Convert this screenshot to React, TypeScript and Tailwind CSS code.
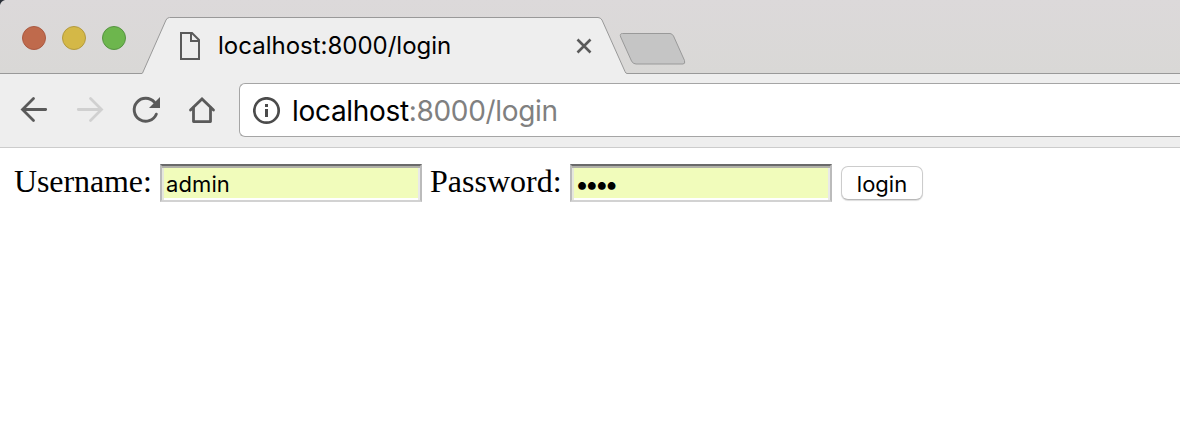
function TrafficLights() {
  return (
    <div className="flex h-[76px] gap-4 pl-[22px]">
      <span className="h-6 w-6 rounded-full border border-[#aa5a42] bg-[#bf6a4c]" />
      <span className="h-6 w-6 rounded-full border border-[#b39a3f] bg-[#d4b847]" />
      <span className="h-6 w-6 rounded-full border border-[#569442] bg-[#6db64d]" />
    </div>
  );
}

function TabStrip() {
  return (
    <div className="flex h-[74px] bg-linear-to-b from-[#dcd9da] to-[#d9d8d6]">
      <div className="relative w-[142px] overflow-hidden border-b border-[#999] pt-[26px]">
        <svg className="absolute top-0 left-0" width="6" height="6">
          <path d="M0 0H5Q1 1 0 5Z" fill="#2b3038" />
        </svg>
        <TrafficLights />
      </div>
      <div className="relative h-[74px] w-[485px]">
        <svg className="absolute inset-0" width="485" height="74" fill="none">
          <path
            d="M0 74V73.5Q.5 73.5 1 72L24 20Q25.300 17.500 27.500 17.500H456Q458.500 17.500 460 20L483 71.500Q483.800 73.500 485 73.500V74Z"
            fill="#eee"
          />
          <path
            d="M0 73.500Q.5 73.500 1 72L24 20Q25.300 17.500 27.500 17.500H456Q458.500 17.500 460 20L483 71.500Q483.800 73.500 485 73.500"
            stroke="#999"
          />
        </svg>
        <div className="relative flex h-[74px] items-start pl-[38px]">
          <svg className="mt-[32px] shrink-0" width="20" height="28" fill="none" stroke="#5a5a5a" strokeWidth="2">
            <path d="M1 1H12L19 8V27H1Z" />
            <path d="M11 1V9H19" />
          </svg>
          <span className="mt-[30px] ml-[18px] w-[358px] font-['Inter',sans-serif] text-[24px] leading-8 text-black">
            localhost:8000/login
          </span>
          <svg className="mt-[38px] shrink-0" width="16" height="16" stroke="#5a5a5a" strokeWidth="2.600">
            <path d="M1.500 1.500L14.500 14.500M14.500 1.500L1.500 14.500" />
          </svg>
        </div>
      </div>
      <div className="flex-1 border-b border-[#999] pt-[32px]">
        <svg className="-ml-[8px]" width="68" height="34">
          <path
            d="M3.500 1.500H51Q53 1.500 54.500 4L65.500 28.500Q66.500 32 64 32H17Q14 32 12.500 29L1.700 5Q.3 1.500 3.500 1.500Z"
            fill="#c5c5c5"
            stroke="#999"
          />
        </svg>
      </div>
    </div>
  );
}

function Toolbar() {
  return (
    <div className="flex h-[74px] border-b border-[#ccc] bg-[#eee]">
      <div className="flex w-[239px] shrink-0 pt-[21px] pl-[18px]">
        <svg className="mr-[26px]" width="30" height="30" fill="none" stroke="#5a5a5a" strokeWidth="2.800" strokeLinecap="round">
          <path d="M27.700 14.500H5M15.500 3.500L4.500 14.500L15.500 25.500" />
        </svg>
        <svg className="mr-[26px]" width="30" height="30" fill="none" stroke="#d0d0d0" strokeWidth="2.800" strokeLinecap="round">
          <path d="M4.300 14.500H27M16.500 3.500L27.500 14.500L16.500 25.500" />
        </svg>
        <svg className="mr-[26px]" width="30" height="30" fill="none">
          <path d="M26.300 19.200A11.500 11.500 0 1 1 24.500 7.300" stroke="#5a5a5a" strokeWidth="2.900" strokeLinecap="round" />
          <path d="M30 2V13H19Z" fill="#5a5a5a" />
        </svg>
        <svg width="30" height="30" fill="none" stroke="#5a5a5a" strokeWidth="2.800" strokeLinecap="round">
          <path d="M4.500 15L16 3.900L27.500 15" />
          <path d="M7.500 13V26.600H24.500V13" strokeLinejoin="round" />
        </svg>
      </div>
      <div className="mt-[9px] flex h-[54px] flex-1 items-center rounded-l-[6px] border border-r-0 border-[#a5a5a5] bg-white pl-[13px]">
        <svg className="mt-px" width="28" height="28" fill="none">
          <circle cx="13.500" cy="13.500" r="12.200" stroke="#4b4b4b" strokeWidth="2.700" />
          <path d="M12 7H15V10H12ZM12 12H15V20H12Z" fill="#4b4b4b" />
        </svg>
        <span className="mt-[2px] ml-[11px] font-['Inter',sans-serif] text-[28px] leading-9 tracking-[-0.32px] text-black">
          localhost<span className="text-[#808080]">:8000/login</span>
        </span>
      </div>
    </div>
  );
}

const field =
  "h-[38px] w-[262px] border-2 border-[#bbb] border-t-[#6a6a6a] border-b-[#d2d2d2] bg-[#f1fcbb] font-['Inter',sans-serif] text-black outline-none shadow-[inset_0_2px_#b0b0a8,inset_2px_0_#e5e7dc,inset_-2px_0_#e9e9e9,inset_0_-2px_#fff] pt-[2px] pr-1";

function LoginForm() {
  return (
    <form className="flex pt-4 pl-[14px] font-['Liberation_Serif',serif] text-[32px] text-black" onSubmit={(e) => e.preventDefault()}>
      <label htmlFor="username" className="w-[146px] leading-[35px] tracking-[-0.1px]">Username:</label>
      <input id="username" defaultValue="admin" className={field + " pl-1 text-[22px] tracking-[0.1px]"} />
      <label htmlFor="password" className="ml-[8px] w-[140px] leading-[35px]">Password:</label>
      <input id="password" type="password" defaultValue="pass" className={field + " pl-[3px] text-[25px] tracking-[-4.2px]"} />
      <button className="mt-[2px] ml-[9px] h-[34px] w-[82px] rounded-[7px] border border-[#ccc] border-b-[#b8b8b8] bg-white pt-px font-['Inter',sans-serif] text-[22px] leading-8 shadow-[0_1px_1px_#ddd]">
        login
      </button>
    </form>
  );
}

export default function App() {
  return (
    <div className="h-[434px] w-[1180px] overflow-hidden bg-white">
      <TabStrip />
      <Toolbar />
      <LoginForm />
    </div>
  );
}
